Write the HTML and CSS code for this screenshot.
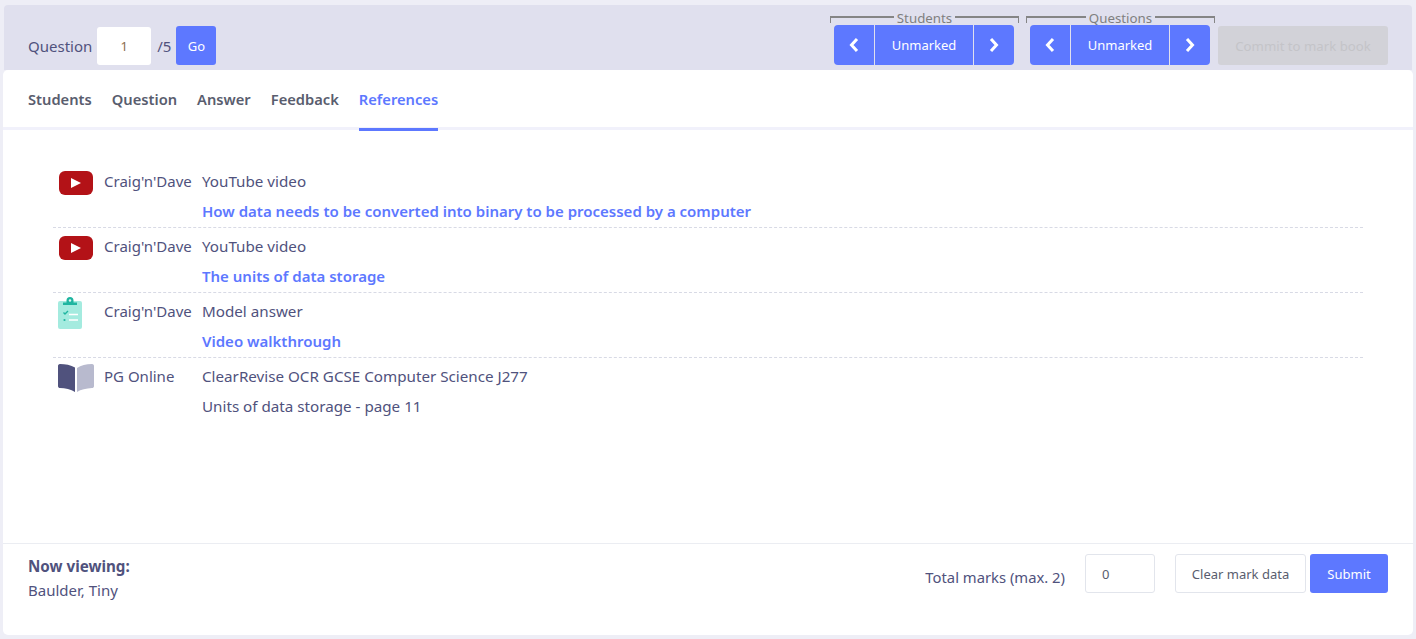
FILE: index.html
```html
<!DOCTYPE html>
<html lang="en">
<head>
    <meta charset="UTF-8">
    <meta name="viewport" content="width=device-width, initial-scale=1.0">
    <title>Mark book - References</title>
    <link rel="stylesheet" href="styles.css">
</head>
<body>

    <!-- Top bar -->
    <header class="topbar">
        <div class="question-jump">
            <span class="question-label">Question</span>
            <input class="question-input" type="text" value="1">
            <span class="question-total">/5</span>
            <button class="btn btn-go">Go</button>
        </div>
        <div class="navs">
            <div class="nav-group">
                <div class="bracket"><span class="bracket-line"></span><span class="bracket-text">Students</span><span class="bracket-line bracket-line-right"></span></div>
                <div class="stepper">
                    <button class="step-arrow"><svg width="12" height="16" viewBox="0 0 12 16"><path d="M9 2 3.500 8 9 14" fill="none" stroke="#fff" stroke-width="3"/></svg></button>
                    <button class="step-label">Unmarked</button>
                    <button class="step-arrow"><svg width="12" height="16" viewBox="0 0 12 16"><path d="M3 2 8.500 8 3 14" fill="none" stroke="#fff" stroke-width="3"/></svg></button>
                </div>
            </div>
            <div class="nav-group nav-questions">
                <div class="bracket"><span class="bracket-line"></span><span class="bracket-text">Questions</span><span class="bracket-line bracket-line-right"></span></div>
                <div class="stepper">
                    <button class="step-arrow"><svg width="12" height="16" viewBox="0 0 12 16"><path d="M9 2 3.500 8 9 14" fill="none" stroke="#fff" stroke-width="3"/></svg></button>
                    <button class="step-label">Unmarked</button>
                    <button class="step-arrow"><svg width="12" height="16" viewBox="0 0 12 16"><path d="M3 2 8.500 8 3 14" fill="none" stroke="#fff" stroke-width="3"/></svg></button>
                </div>
            </div>
            <button class="btn btn-commit" disabled>Commit to mark book</button>
        </div>
    </header>

    <main class="card">
        <nav class="tabs">
            <a class="tab" href="#">Students</a>
            <a class="tab" href="#">Question</a>
            <a class="tab" href="#">Answer</a>
            <a class="tab" href="#">Feedback</a>
            <a class="tab tab-active" href="#">References</a>
        </nav>

        <!-- Listado de referencias -->
        <section class="refs">
            <div class="ref">
                <div class="ref-icon">
                    <svg class="icon-yt" width="36" height="26" viewBox="0 0 36 26"><rect x="1" y="1" width="34" height="24" rx="6" fill="#b31217"/><path d="M13 8v10l10-5z" fill="#fff"/></svg>
                </div>
                <div class="ref-source">Craig'n'Dave</div>
                <div class="ref-type">YouTube video</div>
                <a class="ref-link" href="#">How data needs to be converted into binary to be processed by a computer</a>
            </div>
            <div class="ref">
                <div class="ref-icon">
                    <svg class="icon-yt" width="36" height="26" viewBox="0 0 36 26"><rect x="1" y="1" width="34" height="24" rx="6" fill="#b31217"/><path d="M13 8v10l10-5z" fill="#fff"/></svg>
                </div>
                <div class="ref-source">Craig'n'Dave</div>
                <div class="ref-type">YouTube video</div>
                <a class="ref-link" href="#">The units of data storage</a>
            </div>
            <div class="ref">
                <div class="ref-icon">
                    <svg class="icon-clip" width="27" height="35" viewBox="0 0 27 35">
                        <rect x="2" y="5" width="24" height="28" rx="2" fill="#a4ebdf"/>
                        <path d="M7 9V6.500h3.500V4.500a3.500 3.500 0 0 1 7 0V6.500H21V9z" fill="#1fb5a0"/>
                        <circle cx="14" cy="4.500" r="1.200" fill="#e0f5f1"/>
                        <path d="M7.500 16.500l1.500 1.500 3-3" fill="none" stroke="#1fb5a0" stroke-width="1.400"/>
                        <path d="M13 18.500h9M13 24h9" stroke="#fff" stroke-width="1.500"/>
                        <circle cx="8.500" cy="24" r="1.100" fill="#1fb5a0"/>
                    </svg>
                </div>
                <div class="ref-source">Craig'n'Dave</div>
                <div class="ref-type">Model answer</div>
                <a class="ref-link" href="#">Video walkthrough</a>
            </div>
            <div class="ref">
                <div class="ref-icon">
                    <svg class="icon-book" width="38" height="30" viewBox="0 0 38 30"><path d="M1 3c0-1 .5-2 2-2 5 0 11 1 15 3.500V29C14 26.500 8 25 3 25c-1 0-2-.5-2-2z" fill="#50527d"/><path d="M20 5c4-2.500 9-4 15-4 1.500 0 2 1 2 2v20c0 1.500-1 2-2 2-6 .3-11 1.500-15 4z" fill="#b8bace"/></svg>
                </div>
                <div class="ref-source">PG Online</div>
                <div class="ref-type">ClearRevise OCR GCSE Computer Science J277</div>
                <div class="ref-plain">Units of data storage - page 11</div>
            </div>
        </section>

        <footer class="card-footer">
            <div class="viewing">
                <div class="viewing-title">Now viewing:</div>
                <div class="viewing-name">Baulder, Tiny</div>
            </div>
            <div class="marks">
                <span class="marks-label">Total marks (max. 2)</span>
                <input class="marks-input" type="text" value="0">
                <button class="btn btn-clear">Clear mark data</button>
                <button class="btn btn-submit">Submit</button>
            </div>
        </footer>
    </main>

</body>
</html>
```

FILE: styles.css
```css
* {
    box-sizing: border-box;
}

html, body {
    height: 100%;
}

body {
    margin: 0;
    padding: 5px 3px 4px;
    display: flex;
    flex-direction: column;
    background-color: #eeeef6;
    font-family: "Noto Sans", "Open Sans", sans-serif;
    font-size: 15px;
    color: #50527d;
    overflow: hidden;
}

button, input {
    font-family: inherit;
}

.btn {
    border: none;
    border-radius: 3px;
    font-size: 13px;
    cursor: pointer;
}

/* Top bar */
.topbar {
    height: 65px;
    margin-left: 1px;
    margin-right: 1px;
    padding: 0 24px 5px 24px;
    display: flex;
    justify-content: space-between;
    align-items: flex-end;
    background-color: #e0e0ee;
    border-radius: 4px 4px 0 0;
}

.question-jump {
    display: flex;
    align-items: center;
}

.question-label {
    margin-right: 5px;
}

.question-input {
    width: 54px;
    height: 38px;
    padding: 0;
    border: none;
    border-radius: 3px;
    text-align: center;
    font-size: 13px;
    color: #8a6d4d;
    background-color: #fff;
}

.question-total {
    margin-left: 6px;
    margin-right: 5px;
}

.btn-go {
    width: 40px;
    height: 39px;
    color: #fff;
    background-color: #5d78ff;
}

.navs {
    display: flex;
    align-items: flex-end;
}

.nav-group {
    width: 189px;
    margin-right: 7px;
}

.nav-questions {
    margin-right: 3px;
}

.bracket {
    height: 15px;
    display: flex;
    align-items: flex-start;
    line-height: 16px;
}

.bracket-line {
    flex: 1;
    height: 7px;
    margin-top: 6px;
    border-top: 2px solid #858585;
    border-left: 1px solid #858585;
}

.bracket-line-right {
    border-left: none;
    border-right: 1px solid #858585;
}

.bracket-text {
    padding: 0 3px;
    font-size: 13.3px;
    color: #7f7f7f;
}

.stepper {
    height: 40px;
    margin-left: 4px;
    margin-right: 5px;
    display: flex;
    border-radius: 4px;
    overflow: hidden;
    background-color: #5d78ff;
}

.step-arrow, .step-label {
    padding: 0;
    border: none;
    background-color: transparent;
    color: #fff;
    cursor: pointer;
}

.step-arrow {
    width: 40px;
    display: flex;
    align-items: center;
    justify-content: center;
}

.step-label {
    flex: 1;
    font-size: 13px;
    border-left: 1px solid #e0e0ee;
    border-right: 1px solid #e0e0ee;
}

.btn-commit {
    width: 170px;
    height: 39px;
    font-size: 13.2px;
    color: #c4c4c8;
    background-color: #d2d2d8;
}

/* Card */
.card {
    flex: 1;
    display: flex;
    flex-direction: column;
    background-color: #fff;
    border-radius: 5px;
}

.tabs {
    height: 60px;
    padding-left: 25px;
    display: flex;
    gap: 20px;
    border-bottom: 3px solid #f1f1fb;
}

.tab {
    height: 61px;
    line-height: 59px;
    font-size: 14.7px;
    font-weight: 600;
    color: #595d6e;
    text-decoration: none;
}

.tab-active {
    color: #5d78ff;
    border-bottom: 3px solid #5d78ff;
}

/* Referencias */
.refs {
    flex: 1;
    padding: 33px 50px 0;
}

.ref {
    height: 65px;
    padding-top: 3px;
    display: grid;
    grid-template-columns: 51px 98px 1fr;
    grid-template-rows: 30px 30px;
    line-height: 30px;
    border-bottom: 1px dashed #d8dae5;
}

.ref:last-child {
    border-bottom: none;
}

.ref-icon {
    grid-row: 1 / 3;
}

.ref-icon svg {
    display: block;
}

.icon-yt {
    margin: 4px 0 0 5px;
}

.icon-clip {
    margin: 0 0 0 3px;
}

.icon-book {
    margin: 2px 0 0 4px;
}

.ref-type, .ref-plain {
    font-size: 15.2px;
}

.ref-link {
    grid-column: 3;
    font-weight: 600;
    color: #5d78ff;
    text-decoration: none;
}

.ref-plain {
    grid-column: 3;
}

/* Footer */
.card-footer {
    height: 92px;
    padding: 10px 25px 0 25px;
    display: flex;
    justify-content: space-between;
    border-top: 1px solid #ebedf2;
}

.viewing-title {
    font-weight: 700;
    font-size: 15.2px;
    line-height: 24px;
}

.viewing-name {
    line-height: 24px;
}

.marks {
    display: flex;
    align-items: flex-start;
}

.marks-label {
    margin-right: 20px;
    line-height: 46px;
    font-size: 14.8px;
}

.marks-input {
    width: 70px;
    height: 39px;
    padding: 0 0 0 16px;
    margin-right: 20px;
    border: 1px solid #e2e5ec;
    border-radius: 3px;
    font-size: 13px;
    color: #595d6e;
    background-color: #fff;
}

.btn-clear {
    width: 131px;
    height: 39px;
    margin-right: 4px;
    border: 1px solid #e2e5ec;
    color: #595d6e;
    background-color: #fff;
}

.btn-submit {
    width: 78px;
    height: 39px;
    color: #fff;
    background-color: #5d78ff;
}
```
